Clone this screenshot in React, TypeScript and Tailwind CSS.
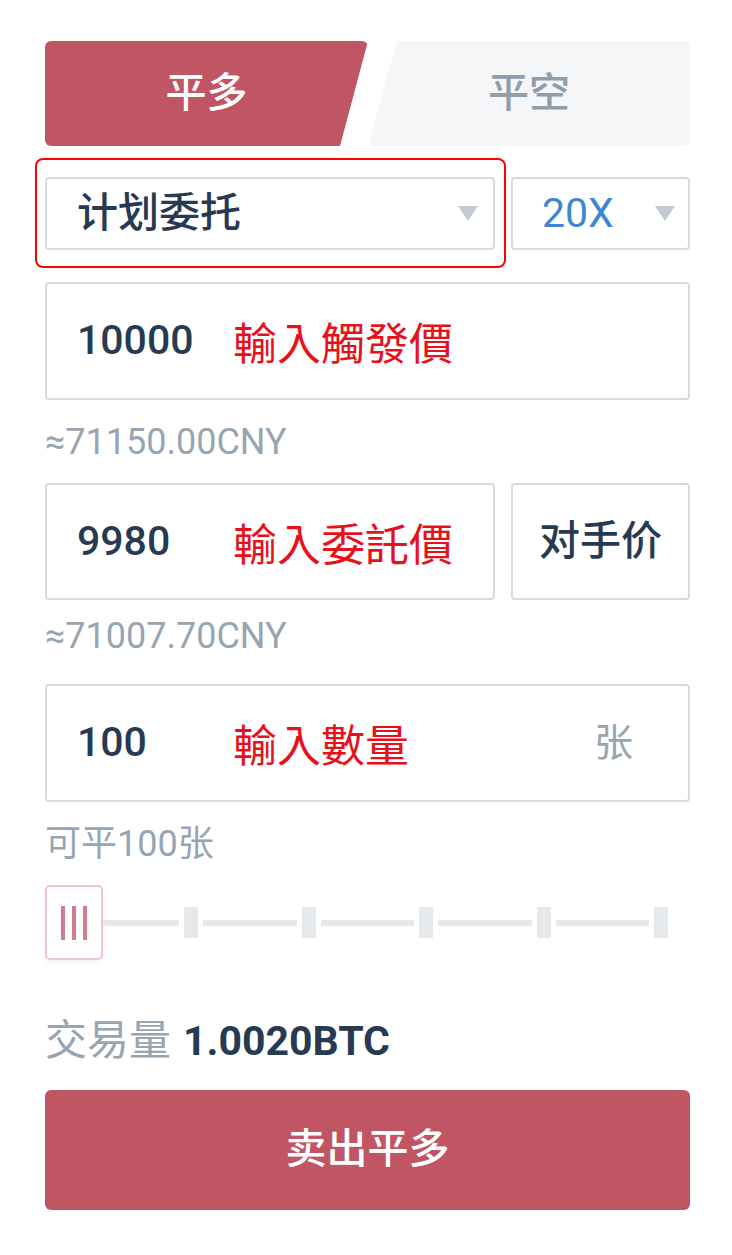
import React from "react";

const RED = "bg-[#c05563]";

function Caret() {
  return (
    <svg width="20" height="15" viewBox="0 0 20 15" className="shrink-0">
      <polygon points="0,0 20,0 10,15" fill="#c4cad1" />
    </svg>
  );
}

function Note({ children }: { children: React.ReactNode }) {
  return (
    <span className="text-[44px] leading-none text-[#e8111b] [font-family:'Noto_Sans_CJK_TC',sans-serif]">
      {children}
    </span>
  );
}

export default function App() {
  return (
    <div className="min-h-screen bg-white [font-family:Roboto,'Noto_Sans_CJK_SC',sans-serif]">
      <div className="ml-[45px] w-[645px] pt-[41px] pb-[45px]">
        {/* tabs */}
        <div className="flex h-[105px]">
          <div
            className={`flex w-[323px] items-center justify-center rounded-[6px] ${RED} text-[41px] font-medium text-white [clip-path:polygon(0_0,100%_0,calc(100%-28px)_100%,0_100%)]`}
          >
            平多
          </div>
          <div className="flex flex-1 items-center justify-center rounded-[6px] bg-[#f5f6f8] text-[41px] font-medium text-[#8f9eac] [clip-path:polygon(29px_0,100%_0,100%_100%,0_100%)]">
            平空
          </div>
        </div>

        {/* order type + leverage */}
        <div className="mt-[31px] flex h-[73px] gap-4">
          <div className="relative w-[450px]">
            <div className="flex h-full items-center justify-between rounded-[4px] border-2 border-[#d6dbe0] pl-[30px] pr-[15px]">
              <span className="text-[41px] font-medium text-[#273a51]">计划委托</span>
              <Caret />
            </div>
            <div className="pointer-events-none absolute -top-[19px] -right-[11px] -bottom-[18px] -left-[10px] rounded-[8px] border-2 border-[#f00]" />
          </div>
          <div className="flex flex-1 items-center justify-between rounded-[4px] border-2 border-[#d6dbe0] pl-[29px] pr-[13px]">
            <span className="text-[41px] text-[#3d86d1]">20X</span>
            <Caret />
          </div>
        </div>

        {/* trigger price */}
        <div className="mt-[32px] flex h-[118px] items-center rounded-[4px] border-2 border-[#d6dbe0] pl-[30px]">
          <span className="w-[156px] text-[41px] font-medium text-[#273a51]">10000</span>
          <Note>輸入觸發價</Note>
        </div>
        <div className="flex h-[83px] items-center text-[36px] leading-none text-[#97a5b2]">
          ≈71150.00CNY
        </div>

        {/* order price */}
        <div className="flex h-[117px] gap-4">
          <div className="flex w-[450px] items-center rounded-[4px] border-2 border-[#d6dbe0] pl-[30px]">
            <span className="w-[156px] text-[41px] font-medium text-[#273a51]">9980</span>
            <Note>輸入委託價</Note>
          </div>
          <div className="flex flex-1 items-center justify-center rounded-[4px] border-2 border-[#d6dbe0] text-[41px] font-medium text-[#273a51]">
            对手价
          </div>
        </div>
        <div className="flex h-[84px] items-center pb-[12px] text-[36px] leading-none text-[#97a5b2]">
          ≈71007.70CNY
        </div>

        {/* amount */}
        <div className="flex h-[118px] items-center rounded-[4px] border-2 border-[#d6dbe0] pl-[30px] pr-[55px]">
          <span className="w-[156px] text-[41px] font-medium text-[#273a51]">100</span>
          <Note>輸入數量</Note>
          <span className="ml-auto text-[39px] text-[#97a5b2]">张</span>
        </div>
        <div className="flex h-[83px] items-center text-[36px] leading-none text-[#97a5b2]">
          可平100张
        </div>

        {/* slider */}
        <div className="flex h-[75px] items-center pr-[22px]">
          <div className="flex h-[75px] w-[58px] shrink-0 items-center justify-center gap-[7px] rounded-[5px] border-2 border-[#f2c4cb] bg-white shadow-[0_2px_6px_rgba(0,0,0,0.06)]">
            <span className="h-[34px] w-[4px] bg-[#d27d8b]" />
            <span className="h-[34px] w-[4px] bg-[#d27d8b]" />
            <span className="h-[34px] w-[4px] bg-[#d27d8b]" />
          </div>
          <span className="mr-[5px] h-[6px] w-[76px] bg-[#e6e9ec]" />
          <span className="h-[31px] w-[14px] shrink-0 bg-[#e6e9ec]" />
          <span className="mx-[5px] h-[6px] flex-1 bg-[#e6e9ec]" />
          <span className="h-[31px] w-[14px] shrink-0 bg-[#e6e9ec]" />
          <span className="mx-[5px] h-[6px] flex-1 bg-[#e6e9ec]" />
          <span className="h-[31px] w-[14px] shrink-0 bg-[#e6e9ec]" />
          <span className="mx-[5px] h-[6px] flex-1 bg-[#e6e9ec]" />
          <span className="h-[31px] w-[14px] shrink-0 bg-[#e6e9ec]" />
          <span className="mx-[5px] h-[6px] flex-1 bg-[#e6e9ec]" />
          <span className="h-[31px] w-[14px] shrink-0 bg-[#e6e9ec]" />
        </div>

        {/* volume */}
        <div className="flex h-[130px] items-center pt-[32px] leading-none">
          <span className="text-[42px] text-[#97a5b2]">交易量</span>
          <span className="ml-[12px] text-[41px] font-bold text-[#273a51]">1.0020BTC</span>
        </div>

        <button
          className={`flex h-[120px] w-full items-center justify-center rounded-[6px] ${RED} text-[41px] font-medium text-white`}
        >
          卖出平多
        </button>
      </div>
    </div>
  );
}
